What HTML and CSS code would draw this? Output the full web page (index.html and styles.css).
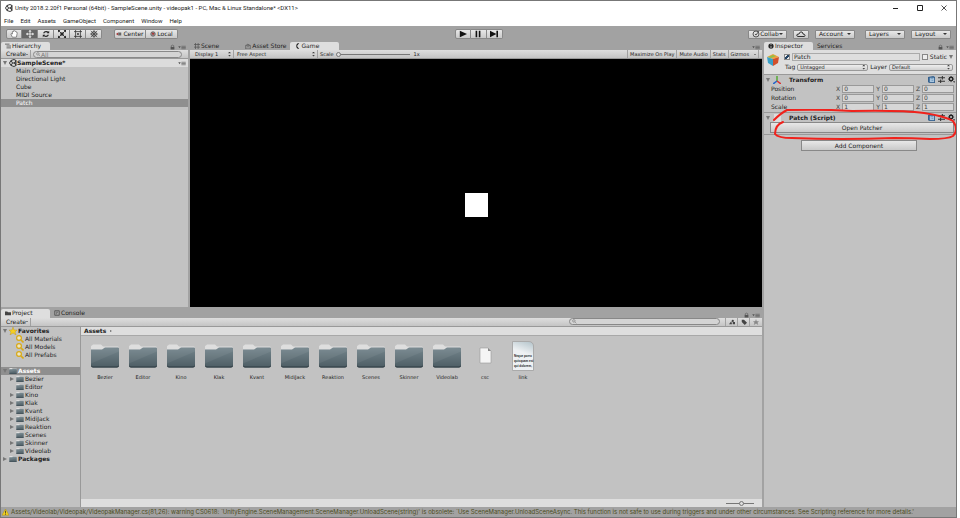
FILE: index.html
```html
<!DOCTYPE html>
<html lang="en">
	<head>
		<meta charset="UTF-8">
		<title>Unity 2018.2.20f1 Personal (64bit) - SampleScene.unity - videopak1</title>
		<link rel="stylesheet" href="styles.css">
	</head>
	<body>
		<!-- shared icons -->
		<svg class="defs" width="0" height="0">
			<defs>
				<linearGradient id="slate" x1="0" y1="0" x2="0" y2="1">
					<stop offset="0" stop-color="#74858c"/>
					<stop offset="1" stop-color="#4d5d64"/>
				</linearGradient>
				<symbol id="folder" viewBox="0 0 30 25">
					<path d="M1 6V3Q1 2 2 2L3 1H11L13 3H28Q29 3 29 5V8H1z" fill="#dedede"/>
					<path d="M1 6H12L15 4H28Q29 4 29 5V22Q29 24 27 24H3Q1 24 1 22z" fill="url(#slate)"/>
					<path d="M1 20L29 8V5L15 4L12 6H1z" fill="#fff" opacity=".06"/>
					<path d="M1 21V22Q1 24 3 24H27Q29 24 29 22V21Q29 23 27 23H3Q1 23 1 21z" fill="#2d3a40"/>
				</symbol>
				<symbol id="unity" viewBox="0 0 16 16">
					<path d="M7 8L4 3L1 8L4 13zM7 8H14M4 3L10 1L14 3V8V13L10 15L4 13M14 3L11 8L14 13" fill="none" stroke="#222" stroke-width="1.800"/>
				</symbol>
				<symbol id="lock" viewBox="0 0 8 8">
					<path d="M1 4H7V8H1z" fill="#555"/>
					<path d="M2 4V2Q4 0 6 2V4" fill="none" stroke="#555"/>
				</symbol>
				<symbol id="menu" viewBox="0 0 12 8">
					<path d="M0 2H4L2 5z" fill="#555"/>
					<path d="M5 2H12M5 4H12M5 6H12" stroke="#555"/>
				</symbol>
				<symbol id="lens" viewBox="0 0 8 8">
					<circle cx="3" cy="3" r="2" fill="none" stroke="#777"/>
					<path d="M5 5L7 7" stroke="#777"/>
				</symbol>
				<symbol id="query" viewBox="0 0 8 8">
					<circle cx="3" cy="3" r="2.4" fill="#ece6c4" stroke="#d9a916" stroke-width="1.2"/>
					<path d="M5 5L7.5 7.5" stroke="#d9a916" stroke-width="1.6"/>
				</symbol>
				<symbol id="book" viewBox="0 0 8 8">
					<path d="M0 1L6 0L8 1V8H2L0 7z" fill="#35618f"/>
					<path d="M2 2H7V7H2z" fill="#a9c6df"/>
					<path d="M3 3H6M4 5H6" stroke="#6f97bb"/>
				</symbol>
				<symbol id="preset" viewBox="0 0 8 8">
					<path d="M0 2H8M0 6H8M5 0V4M3 4V8" stroke="#333" stroke-width="1.2"/>
				</symbol>
				<symbol id="gear" viewBox="0 0 8 8">
					<circle cx="3.5" cy="3.5" r="2" fill="none" stroke="#222" stroke-width="1.6"/>
					<path d="M3.5 0V1M3.5 6V7M0 3.5H1M6 3.5H7M1 1L2 2M5 5L6 6M6 1L5 2M1 6L2 5" stroke="#222"/>
					<path d="M6 6H8L7 8z" fill="#222"/>
				</symbol>
			</defs>
		</svg>

		<header class="titlebar">
			<svg class="logo"><use href="#unity"/></svg>
			<h1>Unity 2018.2.20f1 Personal (64bit) - SampleScene.unity - videopak1 - PC, Mac &amp; Linux Standalone* &lt;DX11&gt;</h1>
			<div class="winbtns">
				<button aria-label="Minimize"><svg viewBox="0 0 8 8"><path d="M1 4.5H6" stroke="#222"/></svg></button>
				<button aria-label="Maximize"><svg viewBox="0 0 8 8"><path d="M1.5 1.5H6.5V6.5H1.5z" fill="none" stroke="#222"/></svg></button>
				<button aria-label="Close"><svg viewBox="0 0 8 8"><path d="M1.5 1.5L6.5 6.5M6.5 1.5L1.5 6.5" stroke="#222" stroke-width=".8"/></svg></button>
			</div>
		</header>
		<nav class="menubar">
			<a href="#">File</a>
			<a href="#">Edit</a>
			<a href="#">Assets</a>
			<a href="#">GameObject</a>
			<a href="#">Component</a>
			<a href="#">Window</a>
			<a href="#">Help</a>
		</nav>

		<div class="toolbar">
			<div class="side">
				<div class="group tools">
					<button aria-label="Hand"><svg viewBox="0 0 16 10"><path d="M6 9L4 5Q4 4 6 5V2Q7 1 7.500 2V1Q8.500 0 9 1.500Q10 1 10.500 2.500Q12 2 12 4L11 9z" fill="#fff" stroke="#555" stroke-width=".8"/></svg></button>
					<button class="on" aria-label="Move"><svg viewBox="0 0 16 10"><path d="M8 1V9M4 5H12" stroke="#fff"/><path d="M8 0L10 2H6zM8 10L10 8H6zM3 5L5 3V7zM13 5L11 3V7z" fill="#fff"/></svg></button>
					<button aria-label="Rotate"><svg viewBox="0 0 16 10"><path d="M5 4Q6 2 8 2Q10 2 11 3.500M11 6Q10 8 8 8Q6 8 5 6.500" fill="none" stroke="#222" stroke-width="1.400"/><path d="M12 1V4H9zM4 9V6H7z" fill="#222"/></svg></button>
					<button aria-label="Scale"><svg viewBox="0 0 16 10"><path d="M6 3H10V7H6z" fill="#333"/><path d="M4 1L12 9M12 1L4 9" stroke="#222"/><path d="M3 0H6L3 3zM13 0V3L10 0zM3 10V7L6 10zM13 10H10L13 7z" fill="#222"/></svg></button>
					<button aria-label="Rect"><svg viewBox="0 0 16 10"><path d="M5 0V10M11 0V10M3 2H13M3 8H13" stroke="#333"/><circle cx="8" cy="5" r="1.200" fill="#333"/></svg></button>
					<button aria-label="Transform"><svg viewBox="0 0 16 10"><circle cx="8" cy="5" r="3" fill="none" stroke="#333"/><path d="M8 0V10M3 5H13M4 1L12 9M12 1L4 9" stroke="#333" stroke-width=".8"/></svg></button>
				</div>
				<div class="group pivot">
					<button><svg viewBox="0 0 8 8"><path d="M0 4L3 2V6z" fill="#a33"/><path d="M3 2H7V6H3z" fill="#666"/></svg>Center</button>
					<button><svg viewBox="0 0 8 8"><circle cx="4" cy="4" r="3" fill="#999" stroke="#555"/><path d="M2 2L6 3L4 6z" fill="#a33"/></svg>Local</button>
				</div>
			</div>
			<div class="group play">
				<button aria-label="Play"><svg viewBox="0 0 16 10"><path d="M4 1L13 5L4 9z" fill="#111"/></svg></button>
				<button aria-label="Pause"><svg viewBox="0 0 16 10"><path d="M6 1V9M10 1V9" stroke="#111" stroke-width="2"/></svg></button>
				<button aria-label="Step"><svg viewBox="0 0 16 10"><path d="M3 1L11 5L3 9z" fill="#111"/><path d="M12 1V9" stroke="#111" stroke-width="2"/></svg></button>
			</div>
			<div class="side right">
				<button class="drop collab"><svg viewBox="0 0 8 8"><circle cx="4" cy="4" r="3" fill="none" stroke="#555"/><path d="M3 4L4 5L7 1" fill="none" stroke="#555"/></svg>Collab<i></i></button>
				<button class="drop cloud" aria-label="Cloud"><svg viewBox="0 0 10 8"><path d="M2 6.500Q0 6 1 4.500Q2 4 3 4Q4 1 6 2Q7 3 7 4Q9 4 9 5.500Q9 6.500 8 6.500z" fill="none" stroke="#333"/></svg></button>
				<button class="drop account">Account<i></i></button>
				<button class="drop layers">Layers<i></i></button>
				<button class="drop layers">Layout<i></i></button>
			</div>
		</div>

		<main class="editor">
			<div class="left">
				<div class="upper">
					<section class="panel hierarchy">
						<div class="tabs">
							<a href="#" class="tab current"><svg viewBox="0 0 8 8"><path d="M0 1.500H6M2 4H8M2 6.500H8" stroke="#444"/></svg>Hierarchy</a>
							<span class="corner"><svg class="lock"><use href="#lock"/></svg><svg class="more"><use href="#menu"/></svg></span>
						</div>
						<div class="bar">
							<button class="create">Create<i></i></button>
							<label class="search"><svg><use href="#lens"/></svg><input type="text" placeholder="All" aria-label="Search hierarchy"></label>
						</div>
						<div class="scene">
							<i class="open"></i><svg class="logo"><use href="#unity"/></svg><b>SampleScene*</b>
							<svg class="more"><use href="#menu"/></svg>
						</div>
						<ul class="objects">
							<li>Main Camera</li>
							<li>Directional Light</li>
							<li>Cube</li>
							<li>MIDI Source</li>
							<li class="selected">Patch</li>
						</ul>
					</section>

					<section class="panel game">
						<div class="tabs">
							<a href="#" class="tab"><svg viewBox="0 0 8 8"><path d="M2 0V8M5.500 0V8M0 2H8M0 5.500H8" stroke="#555"/></svg>Scene</a>
							<a href="#" class="tab store"><svg viewBox="0 0 8 8"><path d="M1 3H7V8H1zM2 3Q3 0 6 3" fill="none" stroke="#555"/><path d="M3 5H5" stroke="#555"/></svg>Asset Store</a>
							<a href="#" class="tab current"><svg viewBox="0 0 8 8"><path d="M7 0A4 4 0 1 0 7 8L4 4z" fill="#222"/></svg>Game</a>
							<span class="corner"><svg class="more"><use href="#menu"/></svg></span>
						</div>
						<div class="bar">
							<button class="display">Display 1<i class="updown"></i></button>
							<button class="aspect">Free Aspect<i class="updown"></i></button>
							<label class="scale">Scale<input type="range" min="1" max="5" value="1">1x</label>
							<span class="options">
								<button>Maximize On Play</button>
								<button>Mute Audio</button>
								<button>Stats</button>
								<button>Gizmos<i></i></button>
							</span>
						</div>
						<div class="view"><div class="cube"></div></div>
					</section>
				</div>

				<section class="panel project">
					<div class="tabs">
						<a href="#" class="tab current"><svg viewBox="0 0 8 8"><path d="M0 2H3L4 3H8V7H0z" fill="#444"/></svg>Project</a>
						<a href="#" class="tab console"><svg viewBox="0 0 8 8"><path d="M1 1H7V7H1z" fill="none" stroke="#444"/><path d="M3 3H5M3 5H4" stroke="#444"/></svg>Console</a>
						<span class="corner"><svg class="lock"><use href="#lock"/></svg><svg class="more"><use href="#menu"/></svg></span>
					</div>
					<div class="bar">
						<button class="create">Create<i></i></button>
						<label class="search"><svg><use href="#lens"/></svg><input type="text" aria-label="Search project"></label>
						<span class="filters">
							<button aria-label="Search by type"><svg viewBox="0 0 8 8"><circle cx="5" cy="2.500" r="1.500" fill="#444"/><path d="M0 7L3 3L4 7zM5 4H8V7H5z" fill="#444"/></svg></button>
							<button aria-label="Search by label"><svg viewBox="0 0 8 8"><path d="M1 1H4L8 5L5 8L1 4z" fill="#444"/></svg></button>
							<button aria-label="Save search"><svg viewBox="0 0 8 8"><path d="M4 0L5 3H8L6 5L7 8L4 6L1 8L2 5L0 3H3z" fill="#888"/></svg></button>
						</span>
					</div>
					<div class="browser">
						<ul class="tree">
							<li class="root"><i class="open"></i><svg viewBox="0 0 8 8"><path d="M4 0L5 3H8L6 5L7 8L4 6L1 8L2 5L0 3H3z" fill="#f5cf22" stroke="#b8901a" stroke-width=".4"/></svg>Favorites</li>
							<li><i class="none"></i><svg><use href="#query"/></svg>All Materials</li>
							<li><i class="none"></i><svg><use href="#query"/></svg>All Models</li>
							<li><i class="none"></i><svg><use href="#query"/></svg>All Prefabs</li>
							<li class="root selected"><i class="open"></i><svg><use href="#folder"/></svg>Assets</li>
							<li><i></i><svg><use href="#folder"/></svg>Bezier</li>
							<li><i class="none"></i><svg><use href="#folder"/></svg>Editor</li>
							<li><i></i><svg><use href="#folder"/></svg>Kino</li>
							<li><i></i><svg><use href="#folder"/></svg>Klak</li>
							<li><i></i><svg><use href="#folder"/></svg>Kvant</li>
							<li><i></i><svg><use href="#folder"/></svg>MidiJack</li>
							<li><i></i><svg><use href="#folder"/></svg>Reaktion</li>
							<li><i class="none"></i><svg><use href="#folder"/></svg>Scenes</li>
							<li><i></i><svg><use href="#folder"/></svg>Skinner</li>
							<li><i></i><svg><use href="#folder"/></svg>Videolab</li>
							<li class="root"><i></i><svg><use href="#folder"/></svg>Packages</li>
						</ul>
						<div class="content">
							<div class="path"><b>Assets</b><i></i></div>
							<ul class="assets">
								<li><svg><use href="#folder"/></svg>Bezier</li>
								<li><svg><use href="#folder"/></svg>Editor</li>
								<li><svg><use href="#folder"/></svg>Kino</li>
								<li><svg><use href="#folder"/></svg>Klak</li>
								<li><svg><use href="#folder"/></svg>Kvant</li>
								<li><svg><use href="#folder"/></svg>MidiJack</li>
								<li><svg><use href="#folder"/></svg>Reaktion</li>
								<li><svg><use href="#folder"/></svg>Scenes</li>
								<li><svg><use href="#folder"/></svg>Skinner</li>
								<li><svg><use href="#folder"/></svg>Videolab</li>
								<li><svg viewBox="0 0 30 30"><path d="M10 7H18L21 10V22H10z" fill="#f5f5f5" stroke="#999" stroke-width=".6"/><path d="M18 7V10H21z" fill="#888"/></svg>csc</li>
								<li>
									<div class="doc">Neque porro<br>quisquam est<br>qui dolorem,</div>
									link
								</li>
							</ul>
							<div class="foot"><input type="range" value="55" aria-label="Icon size"></div>
						</div>
					</div>
				</section>
			</div>

			<section class="panel inspector">
				<div class="tabs">
					<a href="#" class="tab current"><svg viewBox="0 0 8 8"><circle cx="4" cy="4" r="3.500" fill="#222"/><path d="M4 1V3M4 4V7" stroke="#ddd"/></svg>Inspector</a>
					<a href="#" class="tab">Services</a>
					<span class="corner"><svg class="lock"><use href="#lock"/></svg><svg class="more"><use href="#menu"/></svg></span>
				</div>
				<div class="object">
					<svg class="cubeicon" viewBox="0 0 12 12"><path d="M0 3L6 0L12 3L6 5z" fill="#f0a13a"/><path d="M0 3L6 5V12L1 9z" fill="#3aa0c8"/><path d="M12 3L6 5V12L11 9z" fill="#d2502c"/><path d="M1 3L6 1L9 2L4 4z" fill="#8fc04a"/></svg>
					<div class="fields">
						<div class="line">
							<input type="checkbox" checked aria-label="Active">
							<input type="text" class="name" value="Patch" aria-label="Name">
							<label class="static"><input type="checkbox">Static</label><i class="open"></i>
						</div>
						<div class="line">
							<label for="tag">Tag</label>
							<span class="select"><select id="tag"><option>Untagged</option></select><i class="updown"></i></span>
							<label for="layer">Layer</label>
							<span class="select"><select id="layer"><option>Default</option></select><i class="updown"></i></span>
						</div>
					</div>
				</div>
				<div class="component">
					<div class="head">
						<i class="open"></i>
						<svg viewBox="0 0 8 8"><path d="M4 5V0" stroke="#5a3" stroke-width="1.500"/><path d="M4 5L0 8" stroke="#26c" stroke-width="1.500"/><path d="M4 5L8 8" stroke="#d33" stroke-width="1.500"/></svg>
						<b>Transform</b>
						<span class="acts"><svg><use href="#book"/></svg><svg><use href="#preset"/></svg><svg><use href="#gear"/></svg></span>
					</div>
					<div class="vector"><span>Position</span>
						<label>X<input type="text" value="0"></label><label>Y<input type="text" value="0"></label><label>Z<input type="text" value="0"></label>
					</div>
					<div class="vector"><span>Rotation</span>
						<label>X<input type="text" value="0"></label><label>Y<input type="text" value="0"></label><label>Z<input type="text" value="0"></label>
					</div>
					<div class="vector"><span>Scale</span>
						<label>X<input type="text" value="1"></label><label>Y<input type="text" value="1"></label><label>Z<input type="text" value="1"></label>
					</div>
				</div>
				<div class="component script">
					<div class="head">
						<i class="open"></i>
						<svg viewBox="0 0 8 8"><path d="M1 0H6L8 2V8H1z" fill="#ddd"/></svg>
						<b>Patch (Script)</b>
						<span class="acts"><svg><use href="#book"/></svg><svg><use href="#preset"/></svg><svg><use href="#gear"/></svg></span>
					</div>
					<button class="wide">Open Patcher</button>
					<!-- hand drawn marker ring -->
					<svg class="ring" viewBox="0 0 186 34"><path d="M2 11Q9 4 15 1Q50 0 80 2Q130 1 152 4Q172 7 181 12Q187 21 181 27Q176 30 158 30Q140 29 122 29Q70 31 20 29Q6 29 3 25Q3 16 11 13" fill="none" stroke="#f0221c" stroke-width="2" stroke-linecap="round"/></svg>
				</div>
				<button class="add">Add Component</button>
			</section>
		</main>

		<footer class="status">
			<svg viewBox="0 0 8 8"><path d="M4 0L8 7H0z" fill="#f3d21c" stroke="#a58a10" stroke-width=".5"/><path d="M4 2V5M4 5.500V6.500" stroke="#222" stroke-width=".8"/></svg>
			<span>Assets/Videolab/Videopak/VideopakManager.cs(81,26): warning CS0618: `UnityEngine.SceneManagement.SceneManager.UnloadScene(string)' is obsolete: `Use SceneManager.UnloadSceneAsync. This function is not safe to use during triggers and under other circumstances. See Scripting reference for more details.'</span>
		</footer>
	</body>
</html>
```
FILE: styles.css
```css
*{box-sizing:border-box;}
html{background-color:#fff;}
body{
	margin:0 3px 0 0;
	height:100vh;
	display:flex;
	flex-direction:column;
	border:1px solid #777;
	background-color:#a2a2a2;
	color:#222;
	font:6px/8px "DejaVu Sans","Liberation Sans",sans-serif;
	overflow:hidden;
}
ul{
	margin:0;
	padding:0;
	list-style:none;
}
a{
	color:inherit;
	text-decoration:none;
}
button,input,select{
	margin:0;
	padding:0;
	border:0;
	border-radius:0;
	background:none;
	color:inherit;
	font:inherit;
	appearance:none;
}
svg{
	flex:none;
	display:block;
	width:8px;
	height:8px;
}
.defs{
	position:absolute;
	width:0;
	height:0;
}

/* small arrows */
i{
	flex:none;
	border:2px solid transparent;
	border-top-color:#333;
	border-bottom:0;
}
i.updown{
	width:3px;
	height:5px;
	border:solid #444;
	border-width:2px 0;
	clip-path:polygon(50% 0,100% 35%,0 35%,0 65%,100% 65%,50% 100%,0 65%,0 35%);
}

/* title and menu */
.titlebar{
	display:flex;
	align-items:center;
	height:14px;
	padding-left:4px;
	background-color:#fff;
}
.titlebar h1{
	flex:1;
	margin:0 0 0 2px;
	font:6px/14px Roboto,sans-serif;
	white-space:nowrap;
}
.winbtns{display:flex;}
.winbtns button{
	width:24px;
	height:14px;
	display:flex;
	align-items:center;
	justify-content:center;
}
.menubar{
	display:flex;
	gap:7px;
	height:11px;
	padding-left:3px;
	background-color:#fff;
	font:6px/11px Roboto,sans-serif;
}

/* main toolbar */
.toolbar{
	display:flex;
	align-items:center;
	height:16px;
	padding:0 5px;
}
.side{
	flex:1;
	display:flex;
	gap:12px;
}
.side.right{
	justify-content:flex-end;
	gap:6px;
}
.group{display:flex;}
.group button,.drop,.wide,.add{
	display:flex;
	align-items:center;
	justify-content:center;
	height:10px;
	border:1px solid #888;
	background-image:linear-gradient(#e8e8e8,#c9c9c9);
}
.group button + button{border-left:0;}
.group button:first-child{border-radius:2px 0 0 2px;}
.group button:last-child{border-radius:0 2px 2px 0;}
.tools button{width:16px;}
.tools button svg,.play button svg{
	width:14px;
	height:8px;
}
.tools .on{background:#666;}
.pivot button{
	width:32px;
	gap:1px;
}
.pivot svg{
	width:6px;
	height:6px;
}
.play button{width:16px;}
.drop{
	justify-content:space-between;
	height:9px;
	padding:0 3px;
	border-radius:1px;
}
.drop.collab{width:39px;}
.drop.cloud{
	width:16px;
	padding:0 2px;
}
.drop.cloud svg{width:10px;}
.drop.account{
	width:40px;
	margin-right:4px;
}
.drop.layers{
	width:40px;
}

/* panels */
.editor{
	flex:1;
	display:flex;
	gap:2px;
	min-height:0;
}
.left{
	flex:1;
	display:flex;
	flex-direction:column;
	gap:2px;
	min-width:0;
}
.upper{
	flex:4;
	display:flex;
	gap:2px;
	min-height:0;
}
.panel{
	display:flex;
	flex-direction:column;
	background-color:#c2c2c2;
}
.tabs{
	flex:none;
	display:flex;
	height:8px;
	background-color:#a2a2a2;
}
.tab{
	display:flex;
	align-items:center;
	gap:1px;
	padding:0 10px 0 4px;
}
.tab svg{
	width:6px;
	height:6px;
}
.tab.current{
	border-radius:2px 2px 0 0;
	background-color:#dedede;
}
.corner{
	display:flex;
	align-items:flex-end;
	gap:3px;
	margin-left:auto;
	padding-right:2px;
}
.lock{
	width:5px;
	height:6px;
}
.more{
	width:8px;
	height:5px;
}
.bar{
	flex:none;
	display:flex;
	align-items:center;
	height:9px;
	padding-left:4px;
	border-bottom:1px solid #999;
	background-image:linear-gradient(#dedede,#c4c4c4);
}
.bar button{
	display:flex;
	align-items:center;
	justify-content:space-between;
	height:8px;
	border-right:1px solid #a0a0a0;
}
.create{
	width:26px;
	padding:0 2px 0 1px;
}
.create i,.options i{border-width:1px 1px 0;}
.search{
	display:flex;
	align-items:center;
	height:7px;
	border:1px solid #888;
	border-radius:4px;
	background-color:#d4d4d4;
}
.search svg{
	width:5px;
	height:5px;
	margin-left:2px;
}
.search input{
	flex:1;
	min-width:0;
	height:5px;
	line-height:5px;
}
.search input::placeholder{color:#777;}

/* hierarchy */
.hierarchy{width:187px;}
.hierarchy .tab{width:49px;}
.hierarchy .search{
	flex:1;
	margin:0 6px 0 2px;
}
.scene{
	display:flex;
	align-items:center;
	height:8px;
	padding:0 2px;
	background-color:#dcdcdc;
}
.scene .more{margin-left:auto;}
.scene .logo{margin:0 0 0 2px;}
i.open{
	border-width:4px 2px 0;
	border-top-color:#777;
}
.objects li{
	height:8px;
	padding-left:15px;
}
.selected{
	background-color:#8f8f8f;
	color:#fff;
}

/* game */
.game{
	flex:1;
	min-width:0;
}
.game .store{margin-left:12px;}
.game .current{
	width:49px;
	margin-left:-6px;
}
.game .bar{
	font-size:5px;
	padding-left:2px;
}
.display,.aspect{
	width:42px;
	padding:0 2px 0 3px;
}
.aspect{width:84px;}
.scale{
	display:flex;
	align-items:center;
	gap:3px;
	padding-left:2px;
}
input[type=range]{
	height:5px;
	background:linear-gradient(#777,#777) center/100% 1px no-repeat;
}
input[type=range]::-webkit-slider-thumb{
	width:5px;
	height:5px;
	border:1px solid #777;
	border-radius:50%;
	background-color:#ddd;
	appearance:none;
}
.scale input{width:74px;}
.options{
	display:flex;
	margin-left:auto;
	padding-right:3px;
}
.options button{
	padding:0 2px;
	gap:5px;
}
.options button:first-child{border-left:1px solid #a0a0a0;}
.view{
	flex:1;
	display:flex;
	align-items:center;
	justify-content:center;
	padding-top:44px;
	background-color:#000;
}
.cube{
	width:23px;
	height:24px;
	background-color:#fff;
}

/* project */
.project{
	flex:3;
	min-height:0;
}
.project .tabs{height:9px;}
.project .current{width:49px;}
.project .search{
	width:151px;
	margin-left:auto;
}
.filters{
	display:flex;
	margin-left:5px;
	border-left:1px solid #a0a0a0;
}
.filters button{
	width:12px;
	justify-content:center;
}
.filters button:last-child{border:0;}
.filters svg{
	width:6px;
	height:6px;
}
.browser{
	flex:1;
	display:flex;
	min-height:0;
}
.tree{
	width:80px;
	border-right:1px solid #999;
}
.tree li{
	display:flex;
	align-items:center;
	height:8px;
	padding-left:9px;
}
.tree svg{margin-right:1px;}
.tree li.root{
	padding-left:2px;
	font-weight:bold;
}
.tree li.selected{margin-top:8px;}
.tree i{
	margin-right:2px;
	border:2px solid transparent;
	border-left:4px solid #777;
	border-right:0;
}
.tree i.open{
	margin-right:2px;
	border:2px solid transparent;
	border-top:4px solid #777;
	border-bottom:0;
}
.tree i.none{border-color:transparent;}
.content{
	flex:1;
	display:flex;
	flex-direction:column;
	min-width:0;
}
.path{
	display:flex;
	align-items:center;
	gap:4px;
	height:9px;
	padding-left:3px;
	border-bottom:1px solid #a8a8a8;
	background-color:#dedede;
}
.path i{
	border:1px solid transparent;
	border-left:2px solid #666;
	border-right:0;
}
.assets{
	flex:1;
	display:flex;
	flex-wrap:wrap;
	align-content:flex-start;
	padding:5px 0 0 5px;
}
.assets li{
	width:38px;
	font-size:5px;
	text-align:center;
}
.assets svg,.doc{
	width:30px;
	height:30px;
	margin:0 auto 2px;
}
.doc{
	width:22px;
	padding:12px 0 0 1px;
	border:1px solid #aaa;
	border-radius:0 5px 0 0;
	background-image:linear-gradient(200deg,#b4c4cb,#eef1f3 40%);
	font:bold 3px/5px "Liberation Sans",sans-serif;
	text-align:left;
	white-space:nowrap;
}
.foot{
	display:flex;
	align-items:center;
	justify-content:flex-end;
	height:8px;
	padding-right:8px;
	background-color:#dedede;
}
.foot input{width:28px;}

/* inspector */
.inspector{width:192px;}
.inspector .current{width:49px;}
.object{
	display:flex;
	gap:5px;
	height:25px;
	padding:2px 3px 0;
	border-bottom:1px solid #999;
	background-color:#dedede;
}
.cubeicon{
	width:12px;
	height:12px;
	margin-top:2px;
}
.fields{
	flex:1;
	display:flex;
	flex-direction:column;
	min-width:0;
}
.line{
	display:flex;
	align-items:center;
	justify-content:flex-end;
	gap:2px;
	height:10px;
}
input[type=checkbox]{
	width:6px;
	height:6px;
	border:1px solid #888;
	background-color:#eee;
}
input[type=checkbox]:checked{
	background-image:linear-gradient(135deg,transparent 35%,#246 35%,#246 65%,transparent 65%);
}
.name{
	flex:1;
	min-width:0;
	height:8px;
	padding-left:1px;
	border:1px solid #aaa;
}
.static{
	display:flex;
	align-items:center;
	gap:2px;
}
.select{
	display:flex;
	align-items:center;
	width:71px;
	height:7px;
	padding:0 2px;
	border:1px solid #999;
	border-radius:2px;
	background-image:linear-gradient(#eee,#d0d0d0);
	font-size:5px;
}
.select:last-child{width:64px;}
.select select{
	flex:1;
	height:6px;
	line-height:6px;
}
.component{
	padding:0 0 1px 2px;
	border-bottom:1px solid #999;
}
.head{
	display:flex;
	align-items:center;
	gap:3px;
	height:9px;
}
.head b{
	flex:1;
	padding-left:5px;
}
.acts{
	display:flex;
	gap:3px;
	padding-right:1px;
}
.acts svg{
	width:7px;
	height:7px;
}
.vector{
	display:flex;
	align-items:center;
	gap:2px;
	height:9px;
	padding:0 2px 0 5px;
}
.vector span{
	flex:1;
}
.vector label{
	display:flex;
	align-items:center;
	gap:2px;
	color:#444;
}
.vector input{
	width:32px;
	height:8px;
	padding-left:1px;
	border:1px solid #999;
	background-color:#d6d6d6;
}
.script{
	position:relative;
}
.wide{
	width:calc(100% - 6px);
	height:11px;
	margin-left:4px;
}
.ring{
	position:absolute;
	left:8px;
	top:-4px;
	width:186px;
	height:34px;
}
.add{
	flex:none;
	align-self:center;
	width:116px;
	height:11px;
	margin:5px 2px 0 0;
}

/* status line */
.status{
	display:flex;
	align-items:center;
	gap:2px;
	height:10px;
	padding-left:1px;
	color:#4c4c20;
	font-family:Inter,sans-serif;
	white-space:nowrap;
}
.status svg{
	width:7px;
	height:7px;
}
```
